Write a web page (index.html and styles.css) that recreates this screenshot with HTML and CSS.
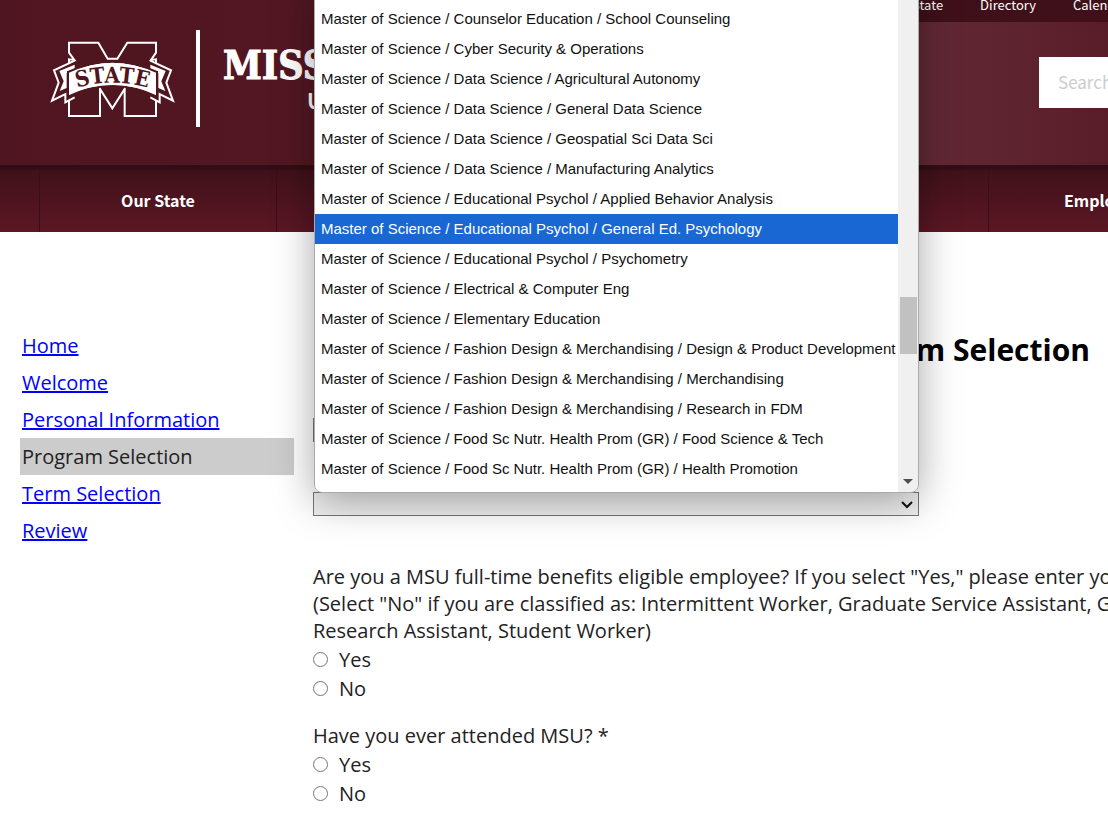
FILE: index.html
```html
<!DOCTYPE html>
<html lang="en">

<head>
    <meta charset="UTF-8">
    <meta name="viewport" content="width=device-width, initial-scale=1.0">
    <title>Program Selection</title>
    <link rel="stylesheet" href="styles.css">
</head>

<body>

    <header class="header">
        <nav class="utility">
            <a href="#">myState</a>
            <a href="#">Directory</a>
            <a href="#">Calendars</a>
        </nav>
        <div class="branding">
            <svg class="logo" viewBox="60 60 378 237" role="img" aria-label="State">
                <defs>
                    <path id="arc" d="M132 206 Q247 170 363 206" />
                    <g id="ribbon">
                        <path class="outline" d="M134 122 L72 151 L86 188 L66 242 L106 222 L106 247 L134 232" />
                        <path class="fill" d="M134 134 L88 153 L101 184 L89 213 L110 204 L110 160 L134 148 Z" />
                    </g>
                </defs>
                <path class="outline" d="M117 150 V118 L133 120 L117 98 V68 H205 L233 116 H262 L292 68 H378 V98 L363 120 L378 118 V288 H284 V207 L247 265 L210 207 V288 H117 Z" />
                <use href="#ribbon" />
                <use href="#ribbon" transform="translate(495 0) scale(-1 1)" />
                <path class="band" d="M114 156 Q247 96 381 156 V230 Q247 164 114 230 Z" />
                <path class="fill" d="M120 159 Q247 98 375 159 V222 Q247 168 120 222 Z" />
                <text class="logo-text" text-anchor="middle"><textPath href="#arc" startOffset="50%">STATE</textPath></text>
            </svg>
            <div class="wordmark">
                <div class="wordmark-name">MISSISSIPPI STATE</div>
                <div class="wordmark-sub">UNIVERSITY</div>
            </div>
            <input class="search" type="search" placeholder="Search" aria-label="Search">
        </div>
        <nav class="main-nav">
            <a href="#">Our State</a>
            <span class="nav-gap"></span>
            <a href="#">Employees</a>
        </nav>
    </header>

    <div class="page">
        <!-- Application steps -->
        <nav class="steps">
            <a href="#">Home</a>
            <a href="#">Welcome</a>
            <a href="#">Personal Information</a>
            <span class="current">Program Selection</span>
            <a href="#">Term Selection</a>
            <a href="#">Review</a>
        </nav>

        <main class="content">
            <h1>Program Selection</h1>

            <div class="field">
                <select class="level" aria-label="Level"></select>
            </div>

            <div class="field program">
                <select aria-label="Program"></select>
                <svg class="chevron" viewBox="0 0 12 8"><path d="M1 1 L6 6 L11 1" /></svg>
                <div class="popup">
                    <ul role="listbox" aria-label="Programs">
                        <li role="option">Master of Science / Counselor Education / School Counseling</li>
                        <li role="option">Master of Science / Cyber Security &amp; Operations</li>
                        <li role="option">Master of Science / Data Science / Agricultural Autonomy</li>
                        <li role="option">Master of Science / Data Science / General Data Science</li>
                        <li role="option">Master of Science / Data Science / Geospatial Sci Data Sci</li>
                        <li role="option">Master of Science / Data Science / Manufacturing Analytics</li>
                        <li role="option">Master of Science / Educational Psychol / Applied Behavior Analysis</li>
                        <li role="option" class="selected" aria-selected="true">Master of Science / Educational Psychol / General Ed. Psychology</li>
                        <li role="option">Master of Science / Educational Psychol / Psychometry</li>
                        <li role="option">Master of Science / Electrical &amp; Computer Eng</li>
                        <li role="option">Master of Science / Elementary Education</li>
                        <li role="option">Master of Science / Fashion Design &amp; Merchandising / Design &amp; Product Development</li>
                        <li role="option">Master of Science / Fashion Design &amp; Merchandising / Merchandising</li>
                        <li role="option">Master of Science / Fashion Design &amp; Merchandising / Research in FDM</li>
                        <li role="option">Master of Science / Food Sc Nutr. Health Prom (GR) / Food Science &amp; Tech</li>
                        <li role="option">Master of Science / Food Sc Nutr. Health Prom (GR) / Health Promotion</li>
                    </ul>
                    <div class="scrollbar">
                        <div class="thumb"></div>
                        <svg class="arrow" viewBox="0 0 10 5"><path d="M0 0 H10 L5 5 Z" /></svg>
                    </div>
                </div>
            </div>

            <fieldset>
                <legend>Are you a MSU full-time benefits eligible employee? If you select "Yes," please enter your<br>
                    (Select "No" if you are classified as: Intermittent Worker, Graduate Service Assistant, Graduate<br>
                    Research Assistant, Student Worker)</legend>
                <label><input type="radio" name="employee">Yes</label>
                <label><input type="radio" name="employee">No</label>
            </fieldset>

            <fieldset>
                <legend>Have you ever attended MSU? *</legend>
                <label><input type="radio" name="attended">Yes</label>
                <label><input type="radio" name="attended">No</label>
            </fieldset>
        </main>
    </div>

</body>

</html>
```

FILE: styles.css
```css
* {
    box-sizing: border-box;
}

body {
    margin: 0;
    font-family: "Open Sans", sans-serif;
    font-size: 20px;
    line-height: 27px;
    color: #222;
    background: #fff;
    overflow: hidden;
}

/* Header */
.header {
    font-family: "Noto Sans CJK SC", sans-serif;
    color: #fff;
    background: linear-gradient(to right, #4f1520, #531722 28%, #612935 84%, #591d29);
    overflow: hidden;
}

.header a {
    color: #fff;
    text-decoration: none;
}

.utility {
    display: flex;
    justify-content: flex-end;
    gap: 37px;
    height: 22px;
    background: linear-gradient(to right, transparent 50%, #3f101a 50%);
    font-size: 13px;
    line-height: 10px;
}

.utility a:last-child {
    width: 35px;
    white-space: nowrap;
}

.branding {
    display: flex;
    align-items: flex-start;
    height: 143px;
    padding: 8px 0 0 50px;
}

.logo {
    flex: none;
    width: 126px;
    height: 79px;
    margin-top: 10px;
}

.logo .outline {
    fill: #501620;
    stroke: #fff;
    stroke-width: 6;
}

.logo .band {
    fill: #fff;
    stroke: #501620;
    stroke-width: 6;
}

.logo .fill {
    fill: #fff;
}

.logo-text {
    font-family: "DejaVu Serif Condensed", "DejaVu Serif", serif;
    font-size: 66px;
    font-weight: bold;
    fill: #501620;
}

.wordmark {
    flex: none;
    width: 600px;
    height: 97px;
    margin-left: 20px;
    padding: 14px 0 0 23px;
    border-left: 4px solid #fff;
    font-weight: bold;
    white-space: nowrap;
}

.wordmark-name {
    font-family: "DejaVu Serif Condensed", "DejaVu Serif", serif;
    font-size: 39px;
    line-height: 42px;
    -webkit-text-stroke: 1px #fff;
}

.wordmark-sub {
    padding-left: 84px;
    font-size: 21px;
    line-height: 28px;
}

.search {
    width: 90px;
    height: 51px;
    margin: 27px -21px 0 auto;
    padding: 0 0 2px 19px;
    border: 0;
    border-radius: 0;
    background: #fff;
    font-family: inherit;
    font-size: 17px;
}

.search::placeholder {
    color: #ccc;
}

.main-nav {
    display: flex;
    height: 67px;
    padding-left: 39px;
    border-top: 5px solid #330d15;
    background: linear-gradient(#40111a, #5c1724);
}

.main-nav a {
    flex: 0 0 237px;
    border-left: 1px solid #3a0e17;
    font-size: 16px;
    font-weight: bold;
    line-height: 60px;
    text-align: center;
}

.nav-gap {
    flex: 0 0 712px;
    border-left: 1px solid #3a0e17;
}

/* Page */
.page {
    display: flex;
    gap: 19px;
    padding: 95px 0 0 20px;
}

.steps {
    display: flex;
    flex: 0 0 274px;
    flex-direction: column;
    line-height: 37px;
}

.steps a,
.steps span {
    padding-left: 2px;
}

.steps a {
    color: #00f;
    text-decoration-thickness: 2px;
}

.steps .current {
    background: #ccc;
}

.content {
    flex: 1;
    min-width: 0;
}

h1 {
    margin: 0 18px 0 0;
    color: #000;
    font-size: 30px;
    line-height: 45px;
    text-align: right;
}

.field {
    position: relative;
    width: 606px;
}

.field select {
    display: block;
    width: 100%;
    height: 24px;
    border: 1px solid #767676;
    border-radius: 0;
    background-color: #f0f0f0;
    appearance: none;
}

.field .level {
    margin-top: 46px;
}

.program {
    margin-top: 50px;
}

.chevron {
    position: absolute;
    top: 9px;
    right: 6px;
    width: 12px;
    height: 8px;
    fill: none;
    stroke: #111;
    stroke-width: 2;
}

.popup {
    position: absolute;
    bottom: 23px;
    left: 1px;
    display: flex;
    width: 605px;
    height: 520px;
    padding-bottom: 8px;
    border: 1px solid #aaa;
    border-radius: 0 0 8px 8px;
    background: linear-gradient(to right, #fff 583px, #f0f0f0 583px);
    box-shadow: 0 8px 40px rgba(0, 0, 0, 0.35);
    font-family: "Liberation Sans", Arial, sans-serif;
    font-size: 15px;
    line-height: 30px;
    color: #111;
}

.popup ul {
    flex: 1;
    align-self: flex-end;
    margin: 0;
    padding: 0;
    list-style: none;
    white-space: nowrap;
}

.popup li {
    padding-left: 6px;
}

.popup .selected {
    background: #1967d2;
    color: #fff;
}

.scrollbar {
    display: flex;
    flex: 0 0 20px;
    flex-direction: column;
    justify-content: flex-end;
    align-items: center;
}

.thumb {
    width: 17px;
    height: 57px;
    margin-bottom: 125px;
    background: #c1c1c1;
}

.arrow {
    width: 10px;
    height: 5px;
    fill: #505050;
}

fieldset {
    min-width: 0;
    margin: 0 0 19px;
    padding: 0;
    border: 0;
}

.program + fieldset {
    margin-top: 47px;
}

legend {
    padding: 0 0 1px;
    white-space: nowrap;
}

label {
    display: flex;
    align-items: center;
    gap: 11px;
    line-height: 29px;
}

input[type="radio"] {
    width: 15px;
    height: 15px;
    margin: 0;
}
```
